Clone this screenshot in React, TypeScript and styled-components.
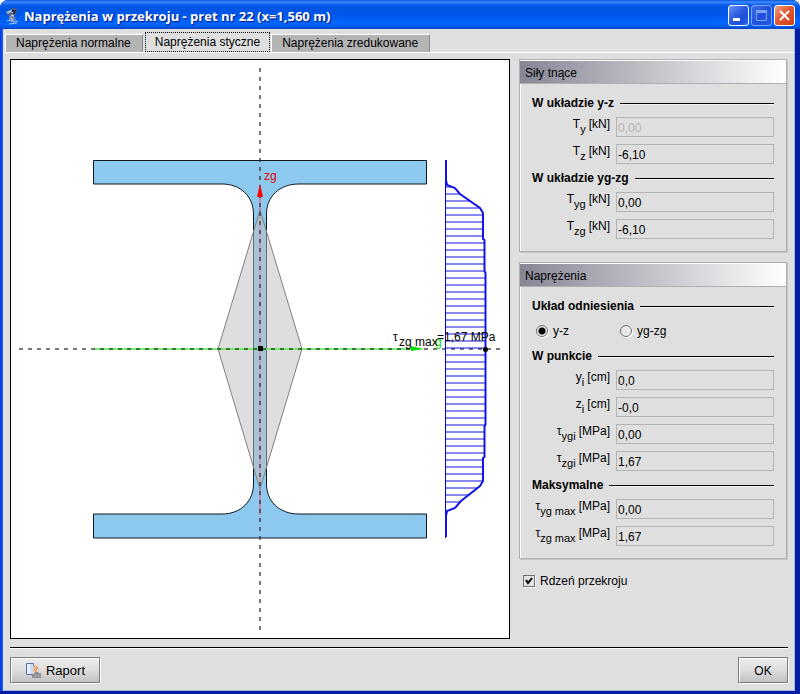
import React, { useId, useState } from "react";
import styled, { createGlobalStyle, css } from "styled-components";

const GlobalStyle = createGlobalStyle`
  *, *::before, *::after { box-sizing: border-box; }
  body {
    margin: 0;
    background: #ffffff;
    font-family: "Liberation Sans", Arial, sans-serif;
    font-size: 12px;
    line-height: 16px;
    color: #000000;
  }
`;

const Window = styled.div`
  display: flex;
  flex-direction: column;
  min-height: 100vh;
  border-radius: 8px 8px 0 0;
  background: linear-gradient(90deg, #0831d9 0, #1660f0 3px, #1660f0 50%, #001ea0 100%);
  padding: 0 5px 4px 3px;
  overflow: hidden;
  box-shadow: inset 0 -4px 0 #001ea0;
`;

const TitleBar = styled.header`
  display: flex;
  align-items: center;
  gap: 4px;
  height: 29px;
  margin: 0 -5px 0 -3px;
  padding: 2px 5px 0 4px;
  background: linear-gradient(
    180deg,
    #0a50d8 0,
    #3c8cff 2px,
    #0a5ce8 5px,
    #0055e5 9px,
    #0056e8 14px,
    #0365fe 22px,
    #0364fc 25px,
    #0446c8 29px
  );
`;

const Title = styled.h1`
  flex: 1;
  margin: 0;
  overflow: hidden;
  color: #ffffff;
  font-family: "Open Sans", "Noto Sans", sans-serif;
  font-size: 13px;
  font-weight: 700;
  line-height: 20px;
  text-shadow: 1px 1px 1px #0a1883;
  white-space: nowrap;
`;

const Captions = styled.div`
  display: flex;
  gap: 2px;
`;

const Caption = styled.button<{ $kind: "normal" | "dim" | "close" }>`
  width: 21px;
  height: 21px;
  padding: 0;
  border: 1px solid #ffffff;
  border-radius: 3px;
  background: linear-gradient(135deg, #6a94f4, #2a5be0 45%, #1c4fd8 75%, #2f6df2);

  ${(p) =>
    p.$kind === "dim" &&
    css`
      border-color: #7ea2f2;
      background: linear-gradient(135deg, #3f70ea, #1f50dc 50%, #2158e2);
    `}
  ${(p) =>
    p.$kind === "close" &&
    css`
      background: linear-gradient(135deg, #f0a086, #e35a34 45%, #cf3c14);
    `}

  svg { display: block; }
`;

const Client = styled.main`
  display: flex;
  flex: 1;
  flex-direction: column;
  border: 1px solid #dce6fb;
  border-top: 0;
  border-right-color: #a9b6de;
  border-bottom-color: #a9b6de;
  background: #dfdfdf;
`;

const TabList = styled.div`
  display: flex;
  align-items: flex-end;
  height: 24px;
  padding-left: 1px;
  border-bottom: 1px solid #ffffff;
`;

const Tab = styled.button<{ $active: boolean }>`
  height: 18px;
  padding: 0 11px 0 10px;
  border: 1px solid;
  border-color: #ffffff #8a8a8a #b4b4b4 #ffffff;
  background: #b4b4b4;
  color: #000000;
  font: inherit;
  line-height: 16px;
  white-space: nowrap;

  ${(p) =>
    p.$active &&
    css`
      height: 20px;
      margin: 0 1px 0 2px;
      padding: 0 9px 1px;
      border: 1px dotted #000000;
      background: #dfdfdf;
    `}
`;

const Body = styled.div`
  display: grid;
  flex: 1;
  grid-template-columns: minmax(0, 1fr) 268px;
  gap: 9px;
  padding: 6px 7px 8px 6px;
`;

const Canvas = styled.section`
  display: flex;
  border: 1px solid #000000;
  background: #ffffff;

  svg {
    display: block;
    flex: 1;
    width: 100%;
    min-width: 0;
    font-family: "Liberation Sans", Arial, sans-serif;
    font-size: 12px;
  }
`;

const Side = styled.aside`
  display: flex;
  flex-direction: column;
  gap: 10px;
`;

const Panel = styled.section`
  border: 1px solid #b0b0b0;
  box-shadow: inset 1px 1px 0 #ffffff, 1px 1px 0 #c4c4c8;
`;

const PanelTitle = styled.h2`
  height: 24px;
  margin: 0;
  padding: 4px 5px 0;
  border-top: 1px solid #ffffff;
  border-bottom: 1px solid #b0b0b0;
  background: linear-gradient(90deg, #878695, #ffffff);
  font-size: 12px;
  font-weight: 400;
  line-height: 16px;
`;

const PanelBody = styled.div`
  padding: 11px 12px 12px;
`;

const Group = styled.fieldset`
  min-width: 0;
  margin: 0;
  padding: 0;
  border: 0;

  & + & { margin-top: 6px; }
`;

const Legend = styled.legend`
  display: flex;
  align-items: center;
  gap: 6px;
  width: 100%;
  margin-bottom: 6px;
  padding: 0;
  font-weight: 700;
  line-height: 16px;
  white-space: nowrap;

  &::after {
    content: "";
    flex: 1;
    height: 1px;
    background: #000000;
    box-shadow: 0 1px 0 #f2f2f2;
  }
`;

const Row = styled.div`
  display: grid;
  grid-template-columns: 78px minmax(0, 1fr);
  gap: 6px;
  height: 20px;

  & + & { margin-top: 7px; }
`;

const RowLabel = styled.label`
  line-height: 14px;
  text-align: right;
  white-space: nowrap;
`;

const Sub = styled.sub`
  margin-right: 3px;
  font-size: 11px;
  line-height: 0;
  vertical-align: -5px;
`;

const Field = styled.input`
  width: 100%;
  height: 20px;
  padding: 2px 1px 0;
  border: 1px solid #b4b4b4;
  background: #dfdfdf;
  color: #000000;
  font: inherit;

  &:disabled { color: #b4b4b4; }
`;

const Radios = styled.div`
  display: grid;
  grid-template-columns: 84px 1fr;
  margin: 2px 0 2px 4px;
`;

const Choice = styled.label`
  display: flex;
  align-items: center;
  gap: 5px;
  height: 18px;
`;

const Radio = styled.input`
  width: 12px;
  height: 12px;
  margin: 0;
  appearance: none;
  border: 1px solid #707070;
  border-radius: 50%;
  background: #e8e8e8;
  box-shadow: 1px 1px 0 #ffffff;

  &:checked { background: radial-gradient(circle, #000000 3px, #e8e8e8 4px); }
`;

const CheckLabel = styled.label`
  display: flex;
  align-items: center;
  gap: 5px;
  margin: 4px 0 0 4px;
`;

const CheckFrame = styled.span`
  display: grid;
  width: 12px;
  height: 12px;

  > * { grid-area: 1 / 1; }
  svg { pointer-events: none; }
  input:not(:checked) + svg { visibility: hidden; }
`;

const Check = styled.input`
  width: 12px;
  height: 12px;
  margin: 0;
  appearance: none;
  border: 1px solid #707070;
  background: #e4e4e4;
  box-shadow: 1px 1px 0 #ffffff;
`;

const Footer = styled.footer`
  display: flex;
  justify-content: space-between;
  margin: 0 6px;
  padding: 9px 0 7px;
  border-top: 1px solid #000000;
  box-shadow: inset 0 1px 0 #ffffff;
`;

const PushButton = styled.button<{ $wide?: boolean }>`
  display: flex;
  align-items: center;
  justify-content: center;
  gap: 4px;
  width: ${(p) => (p.$wide ? 90 : 50)}px;
  height: 26px;
  padding: 1px 0 0;
  border: 1px solid #7c7c7c;
  background: linear-gradient(180deg, #ededed, #dedede 50%, #c2c2c2);
  box-shadow: inset 1px 1px 0 #ffffff, 1px 1px 0 #ffffff;
  color: #000000;
  font: inherit;
  font-size: ${(p) => (p.$wide ? 13 : 12)}px;
`;

const AppIcon = () => (
  <svg width="16" height="18" viewBox="0 0 16 18" aria-hidden="true">
    <path d="M2 5 9 1l4 1-1 6-5 2-4-2z" fill="#4a5f80" />
    <path d="m2 5 7-3 2 1-7 4z" fill="#9dbbe0" />
    <path d="m8 2 4 1-1 4-4-1z" fill="#25304a" />
    <path d="m5 9 4-2 3 6-3 2-4-1z" fill="#7289ac" />
    <path d="M3 14c3-2 5 1 8 1l3-1M5 17l8-1M7 10l2 5" fill="none" stroke="#a9c4e6" />
    <path d="m6 4 3 2M7 8l3 1" stroke="#d6e6fa" />
  </svg>
);

const ReportIcon = () => (
  <svg width="17" height="17" viewBox="0 0 17 17" aria-hidden="true">
    <path d="M1.500 1.500h7v11h-7z" fill="#e4eefc" stroke="#5570aa" />
    <path d="m5 2 3 1v9H6z" fill="#c5d8f5" />
    <path d="M8 4 11 3l3 3-1 6-5 1z" fill="#f0c8aa" />
    <path d="m9 4 3 4m-1-4 2 3m-4 0 2 3" stroke="#dc8a5c" fill="none" />
    <path d="M7 12h2l1-2h3l1 1h2v5H7z" fill="#8d8f96" />
    <path d="M10.500 12v3m3-3v3" stroke="#aeb0b6" />
  </svg>
);

const HATCH = Array.from({ length: 46 }, (_, i) => 187 + i * 7);

const OUTLINE =
  "M93.500 160.500H426.500V184H299C279 184 266.500 197 266.500 214V484C266.500 501 279 514 299 514H426.500V538H93.500V514H222C241 514 253.500 501 253.500 484V214C253.500 197 241 184 222 184H93.500Z";

const STRESS =
  "M446 160V180L447 185L455 188L460 194L480 208L483 213V239L484.500 240V271L485.500 273V425L484.500 426V457L483 458V481L480 486L461 501L455 508L447 511L446 516V537";

const SectionDrawing = ({ core }: { core: boolean }) => (
  <svg viewBox="11 60 498 578" role="img" aria-label="Naprężenia styczne w przekroju">
    <defs>
      <clipPath id="stressArea">
        <path d={`${STRESS}Z`} />
      </clipPath>
    </defs>
    <path d={OUTLINE} fill="#8dc8ee" stroke="#101820" />
    <path d="M260 190V515" stroke="#e86078" strokeWidth="2" strokeOpacity="0.6" />
    {core && (
      <path d="M260 210 302 349 260 489 218 349Z" fill="#c0c0c0" fillOpacity="0.52" stroke="#808080" />
    )}
    <path d="M260 68V630" stroke="#303040" strokeWidth="2" strokeOpacity="0.65" strokeDasharray="4 5" />
    <path d="m260 184 3 13h-6z" fill="#ff0000" />
    <text x="264" y="180" fill="#e00000">zg</text>
    <path d="M94 349H418" stroke="#50ee50" strokeWidth="2" strokeOpacity="0.8" />
    <path d="M19 349H501" stroke="#202020" strokeWidth="2" strokeOpacity="0.6" strokeDasharray="4 5" />
    <path d="M411 346v5l13-2z" fill="#00e000" />
    <text x="435" y="346" fill="#00e000">g</text>
    <g clipPath="url(#stressArea)">
      {HATCH.map((y) => (
        <path key={y} d={`M446 ${y}H488`} stroke="#1010dd" />
      ))}
    </g>
    <path d="M445.500 160V538" stroke="#0000dd" />
    <path d={STRESS} fill="none" stroke="#1414e6" strokeWidth="2" />
    <path d="M258 346h5v5h-5z" />
    <circle cx="485.500" cy="349.500" r="2.500" />
    <text x="393" y="341">τ</text>
    <text x="399" y="346">zg max</text>
    <text x="437" y="341">=1,67 MPa</text>
  </svg>
);

type ValueRowProps = {
  symbol: string;
  index: string;
  unit: string;
  value: string;
  disabled?: boolean;
};

const ValueRow = ({ symbol, index, unit, value, disabled }: ValueRowProps) => {
  const id = useId();
  return (
    <Row>
      <RowLabel htmlFor={id}>
        {symbol}
        <Sub>{index}</Sub>[{unit}]
      </RowLabel>
      <Field id={id} value={value} readOnly disabled={disabled} />
    </Row>
  );
};

const TABS = ["Naprężenia normalne", "Naprężenia styczne", "Naprężenia zredukowane"];

export default function App() {
  const [tab, setTab] = useState(1);
  const [system, setSystem] = useState("y-z");
  const [core, setCore] = useState(true);

  return (
    <>
      <GlobalStyle />
      <Window>
        <TitleBar>
          <AppIcon />
          <Title>Naprężenia w przekroju - pret nr 22 (x=1,560 m)</Title>
          <Captions>
            <Caption $kind="normal" aria-label="Minimalizuj">
              <svg width="19" height="19" aria-hidden="true">
                <path d="M4 12h7v3H4z" fill="#ffffff" />
              </svg>
            </Caption>
            <Caption $kind="dim" aria-label="Maksymalizuj" disabled>
              <svg width="19" height="19" aria-hidden="true">
                <path d="M4.500 5.500h10v9h-10z" fill="none" stroke="#7ea2f2" />
                <path d="M4 4h11v3H4z" fill="#7ea2f2" />
              </svg>
            </Caption>
            <Caption $kind="close" aria-label="Zamknij">
              <svg width="19" height="19" aria-hidden="true">
                <path d="m5 5 9 9m0-9-9 9" stroke="#ffffff" strokeWidth="2" />
              </svg>
            </Caption>
          </Captions>
        </TitleBar>
        <Client>
          <TabList role="tablist">
            {TABS.map((name, i) => (
              <Tab key={name} role="tab" aria-selected={tab === i} $active={tab === i} onClick={() => setTab(i)}>
                {name}
              </Tab>
            ))}
          </TabList>
          <Body>
            <Canvas>
              <SectionDrawing core={core} />
            </Canvas>
            <Side>
              <Panel>
                <PanelTitle>Siły tnące</PanelTitle>
                <PanelBody>
                  <Group>
                    <Legend>W układzie y-z</Legend>
                    <ValueRow symbol="T" index="y" unit="kN" value="0,00" disabled />
                    <ValueRow symbol="T" index="z" unit="kN" value="-6,10" />
                  </Group>
                  <Group>
                    <Legend>W układzie yg-zg</Legend>
                    <ValueRow symbol="T" index="yg" unit="kN" value="0,00" />
                    <ValueRow symbol="T" index="zg" unit="kN" value="-6,10" />
                  </Group>
                </PanelBody>
              </Panel>
              <Panel>
                <PanelTitle>Naprężenia</PanelTitle>
                <PanelBody>
                  <Group>
                    <Legend>Układ odniesienia</Legend>
                    <Radios>
                      {["y-z", "yg-zg"].map((name) => (
                        <Choice key={name}>
                          <Radio
                            type="radio"
                            name="system"
                            checked={system === name}
                            onChange={() => setSystem(name)}
                          />
                          {name}
                        </Choice>
                      ))}
                    </Radios>
                  </Group>
                  <Group>
                    <Legend>W punkcie</Legend>
                    <ValueRow symbol="y" index="i" unit="cm" value="0,0" />
                    <ValueRow symbol="z" index="i" unit="cm" value="-0,0" />
                    <ValueRow symbol="τ" index="ygi" unit="MPa" value="0,00" />
                    <ValueRow symbol="τ" index="zgi" unit="MPa" value="1,67" />
                  </Group>
                  <Group>
                    <Legend>Maksymalne</Legend>
                    <ValueRow symbol="τ" index="yg max" unit="MPa" value="0,00" />
                    <ValueRow symbol="τ" index="zg max" unit="MPa" value="1,67" />
                  </Group>
                </PanelBody>
              </Panel>
              <CheckLabel>
                <CheckFrame>
                  <Check type="checkbox" checked={core} onChange={() => setCore(!core)} />
                  <svg width="12" height="12" viewBox="0 0 12 12" aria-hidden="true">
                    <path d="m3 5 2 3 4-5" fill="none" stroke="#000000" strokeWidth="2" />
                  </svg>
                </CheckFrame>
                Rdzeń przekroju
              </CheckLabel>
            </Side>
          </Body>
          <Footer>
            <PushButton $wide>
              <ReportIcon />
              Raport
            </PushButton>
            <PushButton>OK</PushButton>
          </Footer>
        </Client>
      </Window>
    </>
  );
}
